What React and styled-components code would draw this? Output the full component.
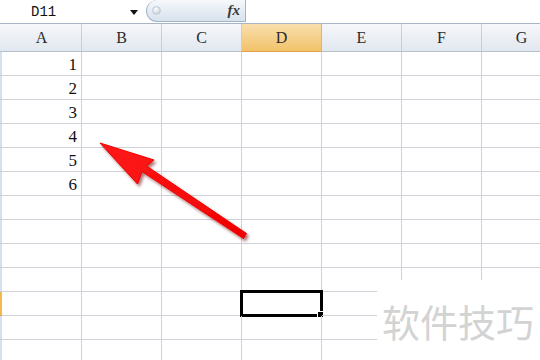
import React from "react";
import styled, { createGlobalStyle } from "styled-components";

const Global = createGlobalStyle`
  html, body { margin: 0; padding: 0; background: #fff; }
  body { width: 540px; height: 360px; overflow: hidden; }
  #root { width: 540px; height: 360px; }
`;

const Page = styled.div`
  position: relative;
  width: 540px;
  height: 360px;
  overflow: hidden;
  background: #fff;
  font-family: "Liberation Serif", serif;
`;

const FormulaBar = styled.div`
  display: flex;
  height: 23px;
  border-bottom: 1px solid #a7b5c6;
  background: #fff;
`;

const NameBox = styled.div`
  width: 146px;
  display: flex;
  align-items: center;
  justify-content: space-between;
  padding: 0 8px 0 31px;
  box-sizing: border-box;
  font-family: "Liberation Mono", monospace;
  font-size: 14px;
  color: #111;
`;

const Caret = styled.span`
  width: 0;
  height: 0;
  border-left: 4px solid transparent;
  border-right: 4px solid transparent;
  border-top: 5px solid #111;
  margin-top: 1px;
`;

const Pill = styled.div`
  width: 100px;
  height: 22px;
  box-sizing: border-box;
  display: flex;
  align-items: center;
  justify-content: space-between;
  padding: 0 5px 0 5px;
  border: 1px solid #a3b3c8;
  border-top: none;
  border-radius: 11px 0 0 11px;
  background: linear-gradient(#f6f8fb, #d8e2ee);
`;

const Knob = styled.span`
  width: 7px;
  height: 7px;
  border-radius: 50%;
  background: radial-gradient(circle at 40% 35%, #ffffff, #b9c2cc);
  border: 1px solid #c4ccd6;
`;

const Fx = styled.span`
  font-family: "Liberation Serif", serif;
  font-style: italic;
  font-weight: bold;
  font-size: 15px;
  color: #3a3a3a;
`;

const Grid = styled.div`
  display: grid;
  grid-template-columns: 2px repeat(7, 80px);
  grid-template-rows: 28px;
  grid-auto-rows: 24px;
`;

const Corner = styled.div`
  background: linear-gradient(#f5f7fa, #e2e8f0);
  border-bottom: 1px solid #b5c1cf;
`;

const ColHead = styled.div`
  display: flex;
  align-items: center;
  justify-content: center;
  padding-top: 1px;
  font-size: 16px;
  color: #2a2a2a;
  border-right: 1px solid ${(p) => (p.$active ? "#e9b25a" : "#c5cfdb")};
  border-bottom: 1px solid ${(p) => (p.$active ? "#e0a24a" : "#b5c1cf")};
  background: ${(p) =>
    p.$active
      ? "linear-gradient(#f9dfae, #f2c26a)"
      : "linear-gradient(#f5f7fa, #e2e8f0)"};
`;

const RowEdge = styled.div`
  background: ${(p) => (p.$active ? "#f5b94a" : "#d6e1ee")};
  border-bottom: 1px solid ${(p) => (p.$active ? "#e6a33c" : "#c2cfdf")};
`;

const Cell = styled.div`
  position: relative;
  box-sizing: border-box;
  border-right: 1px solid #cfd3d9;
  border-bottom: 1px solid #cfd3d9;
  display: flex;
  align-items: center;
  justify-content: flex-end;
  padding: 3px 4px 0 0;
  font-size: 17px;
  color: #111;
`;

const Selection = styled.div`
  position: absolute;
  left: -2px;
  top: -2px;
  right: -2px;
  bottom: -2px;
  border: 3px solid #000;
`;

const Handle = styled.div`
  position: absolute;
  right: -4px;
  bottom: -4px;
  width: 5px;
  height: 5px;
  background: #000;
  border: 1px solid #fff;
`;

const Watermark = styled.div`
  position: absolute;
  left: 377px;
  top: 280px;
  right: 0;
  bottom: 0;
  background: #fff;
  display: flex;
  align-items: center;
  padding: 0 0 0 5px;
  font-family: "Noto Sans CJK SC", sans-serif;
  font-size: 38px;
  color: #d3d3d3;
`;

const ArrowSvg = styled.svg`
  position: absolute;
  left: 0;
  top: 0;
  pointer-events: none;
`;

const cols = ["A", "B", "C", "D", "E", "F", "G"];
const ROWS = 13;

export default function App() {
  return (
    <Page>
      <Global />
      <FormulaBar>
        <NameBox>
          <span>D11</span>
          <Caret />
        </NameBox>
        <Pill>
          <Knob />
          <Fx>fx</Fx>
        </Pill>
      </FormulaBar>
      <Grid>
        <Corner />
        {cols.map((c) => (
          <ColHead key={c} $active={c === "D"}>
            {c}
          </ColHead>
        ))}
        {Array.from({ length: ROWS }).map((_, r) => (
          <React.Fragment key={r}>
            <RowEdge $active={r === 10} />
            {cols.map((c, ci) => (
              <Cell key={c}>
                {ci === 0 && r < 6 ? r + 1 : null}
                {ci === 3 && r === 10 ? (
                  <Selection>
                    <Handle />
                  </Selection>
                ) : null}
              </Cell>
            ))}
          </React.Fragment>
        ))}
      </Grid>
      <ArrowSvg width="540" height="360" viewBox="0 0 540 360">
        <defs>
          <filter id="sh" x="-20%" y="-20%" width="140%" height="140%">
            <feDropShadow dx="2" dy="2.5" stdDeviation="1.6" floodColor="#6a0000" floodOpacity="0.55" />
          </filter>
          <linearGradient id="rg" x1="0" y1="0" x2="1" y2="1">
            <stop offset="0" stopColor="#ff1a1a" />
            <stop offset="1" stopColor="#f00000" />
          </linearGradient>
        </defs>
        <polygon
          filter="url(#sh)"
          fill="url(#rg)"
          stroke="#f20000"
          strokeWidth="1"
          strokeLinejoin="round"
          points="100,143 154,160 146.5,166 246.5,233.5 243.5,238.5 142,171.5 137.5,184"
        />
      </ArrowSvg>
      <Watermark>软件技巧</Watermark>
    </Page>
  );
}
